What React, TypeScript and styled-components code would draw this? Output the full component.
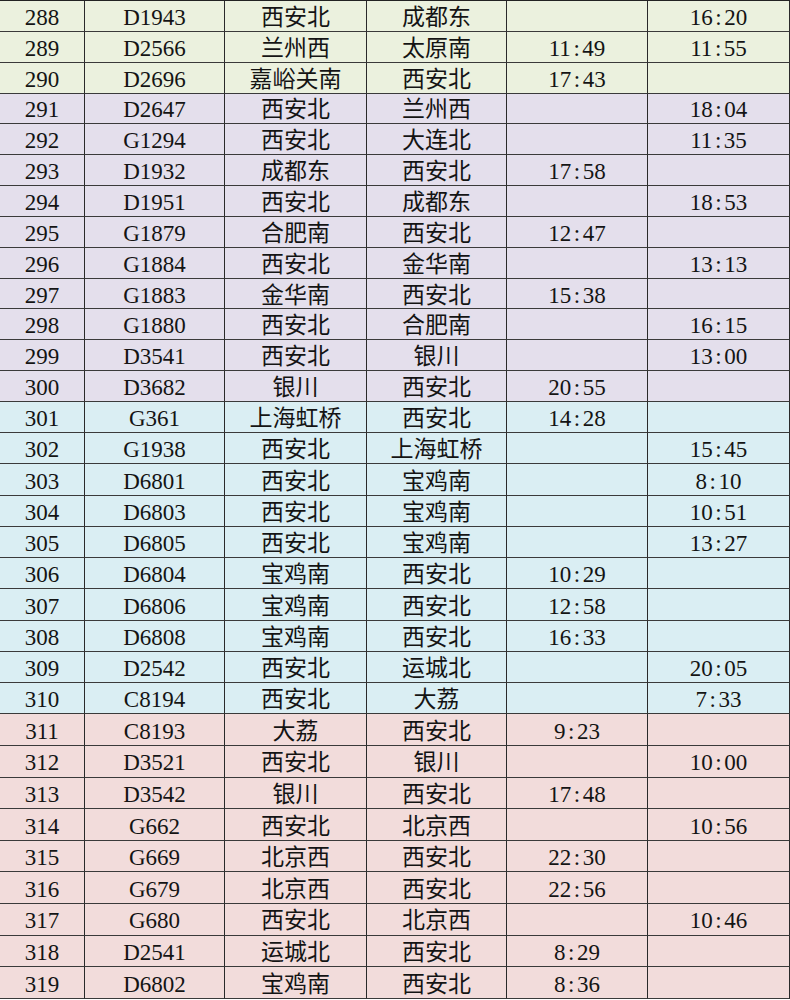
import React from 'react';
import styled, { createGlobalStyle } from 'styled-components';

const GlobalStyle = createGlobalStyle`
  html, body {
    margin: 0;
    padding: 0;
    background: #ffffff;
    overflow: hidden;
  }
  * {
    box-sizing: border-box;
  }
`;

type Group = 'green' | 'purple' | 'blue' | 'pink';

const fills: Record<Group, string> = {
  green: '#ebf1de',
  purple: '#e4dfec',
  blue: '#daeef3',
  pink: '#f2dcdb',
};

// row heights drift a little down the sheet in the screenshot
const heights: Record<Group, number> = {
  green: 30.85,
  purple: 30.85,
  blue: 31.25,
  pink: 31.6,
};

const Sheet = styled.div`
  width: 790px;
  height: 1000px;
  display: flex;
  flex-direction: column;
  border-top: 1px solid #222;
  font-family: 'Liberation Serif', 'Noto Sans CJK SC', serif;
  font-size: 23px;
  color: #141414;
`;

const Row = styled.div<{ $group: Group }>`
  display: grid;
  grid-template-columns: 85px 140px 142px 140px 141px 142px;
  flex: 0 0 ${({ $group }) => heights[$group]}px;
  background-color: ${({ $group }) => fills[$group]};
`;

const Cell = styled.div`
  display: flex;
  align-items: center;
  justify-content: center;
  padding-top: 4px;
  line-height: 24px;
  white-space: nowrap;
  border-right: 1px solid #2a2a2a;
  border-bottom: 1px solid #3a3a3a;
`;

const Colon = styled.span`
  display: inline-block;
  width: 0.5em;
  text-align: center;
`;

const Time: React.FC<{ value: string }> = ({ value }) => {
  if (!value) return null;
  const [h, m] = value.split(':');
  return (
    <>
      {h}
      <Colon>:</Colon>
      {m}
    </>
  );
};

type Train = [string, string, string, string, string, Group];

const trains: Train[] = [
  ['D1943', '西安北', '成都东', '', '16:20', 'green'],
  ['D2566', '兰州西', '太原南', '11:49', '11:55', 'green'],
  ['D2696', '嘉峪关南', '西安北', '17:43', '', 'green'],
  ['D2647', '西安北', '兰州西', '', '18:04', 'purple'],
  ['G1294', '西安北', '大连北', '', '11:35', 'purple'],
  ['D1932', '成都东', '西安北', '17:58', '', 'purple'],
  ['D1951', '西安北', '成都东', '', '18:53', 'purple'],
  ['G1879', '合肥南', '西安北', '12:47', '', 'purple'],
  ['G1884', '西安北', '金华南', '', '13:13', 'purple'],
  ['G1883', '金华南', '西安北', '15:38', '', 'purple'],
  ['G1880', '西安北', '合肥南', '', '16:15', 'purple'],
  ['D3541', '西安北', '银川', '', '13:00', 'purple'],
  ['D3682', '银川', '西安北', '20:55', '', 'purple'],
  ['G361', '上海虹桥', '西安北', '14:28', '', 'blue'],
  ['G1938', '西安北', '上海虹桥', '', '15:45', 'blue'],
  ['D6801', '西安北', '宝鸡南', '', '8:10', 'blue'],
  ['D6803', '西安北', '宝鸡南', '', '10:51', 'blue'],
  ['D6805', '西安北', '宝鸡南', '', '13:27', 'blue'],
  ['D6804', '宝鸡南', '西安北', '10:29', '', 'blue'],
  ['D6806', '宝鸡南', '西安北', '12:58', '', 'blue'],
  ['D6808', '宝鸡南', '西安北', '16:33', '', 'blue'],
  ['D2542', '西安北', '运城北', '', '20:05', 'blue'],
  ['C8194', '西安北', '大荔', '', '7:33', 'blue'],
  ['C8193', '大荔', '西安北', '9:23', '', 'pink'],
  ['D3521', '西安北', '银川', '', '10:00', 'pink'],
  ['D3542', '银川', '西安北', '17:48', '', 'pink'],
  ['G662', '西安北', '北京西', '', '10:56', 'pink'],
  ['G669', '北京西', '西安北', '22:30', '', 'pink'],
  ['G679', '北京西', '西安北', '22:56', '', 'pink'],
  ['G680', '西安北', '北京西', '', '10:46', 'pink'],
  ['D2541', '运城北', '西安北', '8:29', '', 'pink'],
  ['D6802', '宝鸡南', '西安北', '8:36', '', 'pink'],
];

const App: React.FC = () => (
  <>
    <GlobalStyle />
    <Sheet>
      {trains.map(([code, from, to, arrive, depart, group], i) => (
        <Row key={code + i} $group={group}>
          <Cell>{288 + i}</Cell>
          <Cell>{code}</Cell>
          <Cell>{from}</Cell>
          <Cell>{to}</Cell>
          <Cell>
            <Time value={arrive} />
          </Cell>
          <Cell>
            <Time value={depart} />
          </Cell>
        </Row>
      ))}
    </Sheet>
  </>
);

export default App;
